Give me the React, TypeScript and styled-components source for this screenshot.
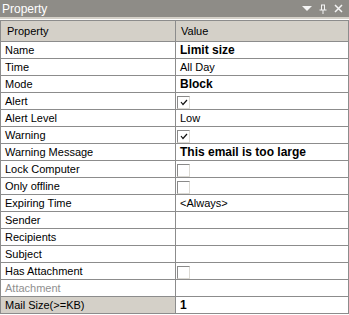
import React from "react";
import styled, { createGlobalStyle } from "styled-components";

const Global = createGlobalStyle`
  html, body { margin: 0; padding: 0; background: #ffffff; }
  body { font-family: "Liberation Sans", Arial, sans-serif; font-size: 11px; }
`;

const Panel = styled.div`
  width: 349px;
  height: 315px;
  background: #ffffff;
  display: flex;
  flex-direction: column;
  overflow: hidden;
`;

const TitleBar = styled.div`
  height: 17px;
  background: #8e8c87;
  color: #ffffff;
  display: flex;
  align-items: center;
  padding-left: 2px;
  font-size: 12px;
  box-sizing: border-box;
`;

const TitleText = styled.span`
  flex: 1;
`;

const TitleButtons = styled.div`
  display: flex;
  align-items: center;
  gap: 7px;
  padding-right: 6px;
`;

const Separator = styled.div`
  height: 2px;
  background: #d4d0c8;
  border-bottom: 1px solid #ffffff;
`;

const Table = styled.div`
  display: flex;
  flex-direction: column;
`;

const Row = styled.div<{ $header?: boolean }>`
  display: grid;
  grid-template-columns: 176px 173px;
  height: ${(p) => (p.$header ? "22px" : "17px")};
  box-sizing: border-box;
  border-top: ${(p) => (p.$header ? "1px solid #8c8c8c" : "none")};
  border-bottom: 1px solid #8c8c8c;
  background: ${(p) => (p.$header ? "#d4d0c8" : "#ffffff")};
`;

const NameCell = styled.div<{ $disabled?: boolean; $selected?: boolean; $header?: boolean }>`
  border-left: 1px solid #8c8c8c;
  border-right: 1px solid #8c8c8c;
  display: flex;
  align-items: center;
  padding-left: ${(p) => (p.$header ? "6px" : "4px")};
  color: ${(p) => (p.$disabled ? "#8f8f8f" : "#000000")};
  background: ${(p) => (p.$selected ? "#d4d0c8" : "transparent")};
  white-space: nowrap;
  overflow: hidden;
`;

const ValueCell = styled.div<{ $bold?: boolean; $header?: boolean }>`
  border-right: 1px solid #8c8c8c;
  display: flex;
  align-items: center;
  padding-left: ${(p) => (p.$header ? "5px" : "4px")};
  font-weight: ${(p) => (p.$bold ? "bold" : "normal")};
  font-size: ${(p) => (p.$bold ? "12px" : "11px")};
  white-space: nowrap;
  overflow: hidden;
`;

const CheckBox = styled.div`
  width: 13px;
  height: 13px;
  box-sizing: border-box;
  margin-left: -3px;
  margin-top: 2px;
  background: #ffffff;
  border-top: 1px solid #8a8a8a;
  border-left: 1px solid #8a8a8a;
  border-right: 1px solid #dcdad4;
  border-bottom: 1px solid #dcdad4;
  display: flex;
  align-items: center;
  justify-content: center;
`;

type Item = {
  name: string;
  value?: string;
  bold?: boolean;
  check?: boolean;
  disabled?: boolean;
  selected?: boolean;
};

const items: Item[] = [
  { name: "Name", value: "Limit size", bold: true },
  { name: "Time", value: "All Day" },
  { name: "Mode", value: "Block", bold: true },
  { name: "Alert", check: true },
  { name: "Alert Level", value: "Low" },
  { name: "Warning", check: true },
  { name: "Warning Message", value: "This email is too large", bold: true },
  { name: "Lock Computer", check: false },
  { name: "Only offline", check: false },
  { name: "Expiring Time", value: "<Always>" },
  { name: "Sender" },
  { name: "Recipients" },
  { name: "Subject" },
  { name: "Has Attachment", check: false },
  { name: "Attachment", disabled: true },
  { name: "Mail Size(>=KB)", value: "1", bold: true, selected: true },
];

const Check = ({ on }: { on: boolean }) => (
  <CheckBox>
    {on && (
      <svg width="8" height="7" viewBox="0 0 8 7">
        <path d="M1 3 L3 5.5 L7 1" stroke="#111" strokeWidth="1.2" fill="none" />
      </svg>
    )}
  </CheckBox>
);

export default function App() {
  return (
    <>
      <Global />
      <Panel>
        <TitleBar>
          <TitleText>Property</TitleText>
          <TitleButtons>
            <svg width="10" height="6" viewBox="0 0 10 6">
              <path d="M0 0 H10 L5 5 Z" fill="#f4f4f4" />
            </svg>
            <svg width="8" height="10" viewBox="0 0 8 10">
              <path d="M2 1 H6 M2.5 1 V6 M5.5 1 V6 M0.5 6 H7.5 M4 6 V10" stroke="#f4f4f4" strokeWidth="1" fill="none" />
            </svg>
            <svg width="9" height="9" viewBox="0 0 9 9">
              <path d="M1 1 L8 8 M8 1 L1 8" stroke="#f4f4f4" strokeWidth="1.5" fill="none" />
            </svg>
          </TitleButtons>
        </TitleBar>
        <Separator />
        <Table>
          <Row $header>
            <NameCell $header>Property</NameCell>
            <ValueCell $header>Value</ValueCell>
          </Row>
          {items.map((it) => (
            <Row key={it.name}>
              <NameCell $disabled={it.disabled} $selected={it.selected}>
                {it.name}
              </NameCell>
              <ValueCell $bold={it.bold}>
                {it.check !== undefined ? <Check on={it.check} /> : it.value}
              </ValueCell>
            </Row>
          ))}
        </Table>
      </Panel>
    </>
  );
}
